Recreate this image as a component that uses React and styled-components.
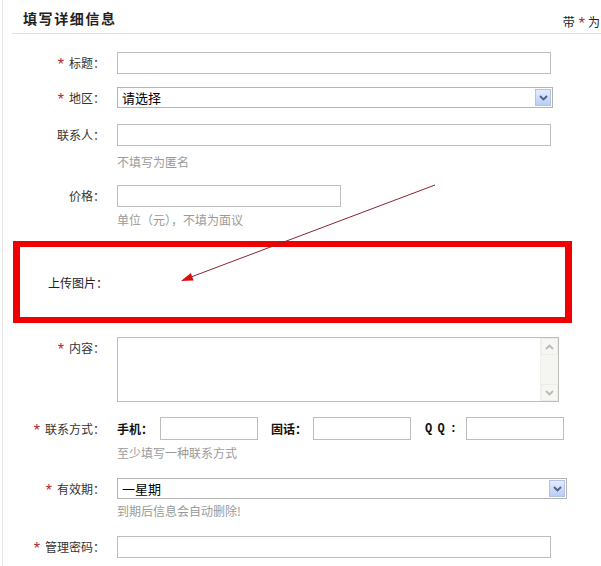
import React from "react";
import styled, { createGlobalStyle } from "styled-components";

const GlobalStyle = createGlobalStyle`
  html, body {
    margin: 0;
    padding: 0;
    background: #fff;
    overflow: hidden;
  }
  body {
    font-family: "Noto Sans CJK SC", "Liberation Sans", sans-serif;
    font-size: 12px;
    color: #333;
  }
`;

const StPage = styled.div`
  position: relative;
  width: 598px;
  height: 566px;
  margin-left: 2px;
  border-left: 1px solid #e4e4e4;
  overflow: hidden;
`;

const StHeader = styled.header`
  display: flex;
  justify-content: space-between;
  align-items: flex-start;
  height: 33px;
  margin-left: 9px;
  padding-left: 11px;
  border-bottom: 1px solid #dedede;
`;

const StTitle = styled.h2`
  margin: 9px 0 0 0;
  font-size: 14px;
  line-height: 18px;
  font-weight: bold;
  letter-spacing: 1.6px;
  color: #222;
`;

const StNote = styled.div`
  margin-top: 15px;
  margin-right: 1px;
  white-space: nowrap;
  line-height: 14px;
  color: #222;
`;

const StForm = styled.div`
  display: flex;
  flex-direction: column;
`;

const StRow = styled.div`
  display: flex;
  align-items: flex-start;
  gap: 14px;
  margin-top: ${(p) => p.$top}px;
`;

const StLabel = styled.label`
  width: 102px;
  margin-right: -2px;
  flex-shrink: 0;
  text-align: right;
  white-space: nowrap;
  line-height: ${(p) => p.$h}px;
  padding-top: ${(p) => p.$pad || 0}px;
  color: #333;
`;

const StStar = styled.span`
  display: inline-block;
  color: #b3262b;
  font-family: "Liberation Sans", sans-serif;
  font-size: 16px;
  line-height: 10px;
  vertical-align: -2px;
  margin: 0 ${(p) => p.$gap ?? 5}px 0 ${(p) => p.$lead || 0}px;
`;

const StField = styled.div`
  display: flex;
  flex-direction: column;
`;

const StInput = styled.input`
  box-sizing: border-box;
  width: ${(p) => p.$w}px;
  height: ${(p) => p.$h || 22}px;
  border: 1px solid #bdbdbd;
  padding: 0 4px;
  font: inherit;
  background: #fff;
  outline: none;
`;

const StHint = styled.div`
  margin-top: ${(p) => p.$gap}px;
  line-height: 14px;
  color: #9a9a9a;
`;

const StSelect = styled.div`
  box-sizing: border-box;
  width: ${(p) => p.$w}px;
  height: 21px;
  border: 1px solid #b4b4b4;
  display: flex;
  align-items: center;
  justify-content: space-between;
  padding: 1px 1px 1px 4px;
  font-size: 13px;
  color: #000;
  background: #fff;
`;

const StSelectBtn = styled.div`
  box-sizing: border-box;
  width: 16px;
  height: 17px;
  border: 1px solid #b2c3e6;
  background: linear-gradient(#e3ecfd, #b9cdf6);
  display: flex;
  align-items: center;
  justify-content: center;
`;

const StUploadBox = styled.div`
  box-sizing: border-box;
  display: flex;
  align-items: center;
  width: 559px;
  height: 82px;
  margin-top: 14px;
  margin-left: 10px;
  border-style: solid;
  border-color: #f00000;
  border-width: 6px 7px;
`;

const StUploadLabel = styled.div`
  width: 88px;
  text-align: right;
  color: #222;
  line-height: 14px;
  margin-top: 2px;
`;

const StTextArea = styled.div`
  box-sizing: border-box;
  display: flex;
  justify-content: flex-end;
  width: 442px;
  height: 65px;
  border: 1px solid #bdbdbd;
  background: #fff;
`;

const StScroll = styled.div`
  width: 17px;
  display: flex;
  flex-direction: column;
  justify-content: space-between;
  background: #f5f5f2;
  border-left: 1px solid #f0f0ec;
`;

const StScrollBtn = styled.div`
  box-sizing: border-box;
  height: 17px;
  border: 1px solid #ececea;
  background: #f6f6f3;
  display: flex;
  align-items: center;
  justify-content: center;
`;

const StContact = styled.div`
  display: flex;
  align-items: center;
`;

const StSubLabel = styled.span`
  width: ${(p) => p.$w}px;
  flex-shrink: 0;
  color: #111;
  font-weight: bold;
  white-space: nowrap;
`;

const StQQ = styled(StSubLabel)`
  font-family: "Liberation Mono", monospace;
  font-size: 12px;
  letter-spacing: -1px;
  padding-left: 2px;
  box-sizing: border-box;
`;

const StSpacer = styled.span`
  width: ${(p) => p.$w}px;
  flex-shrink: 0;
`;

const StArrow = styled.svg`
  position: absolute;
  left: -3px;
  top: 0;
  pointer-events: none;
`;

const Chevron = ({ color = "#4d6185", up = false }) => (
  <svg width="9" height="6" viewBox="0 0 9 6">
    <path
      d={up ? "M1 5 L4.5 1.5 L8 5" : "M1 1 L4.5 4.5 L8 1"}
      fill="none"
      stroke={color}
      strokeWidth="1.8"
    />
  </svg>
);

const Select = ({ w, value }) => (
  <StSelect $w={w}>
    <span>{value}</span>
    <StSelectBtn>
      <Chevron />
    </StSelectBtn>
  </StSelect>
);

const Label = ({ star, h = 22, pad, children }) => (
  <StLabel $h={h} $pad={pad}>
    {star && <StStar>*</StStar>}
    {children}
  </StLabel>
);

const App = () => {
  return (
    <>
      <GlobalStyle />
      <StPage>
        <StHeader>
          <StTitle>填写详细信息</StTitle>
          <StNote>
            带<StStar $lead={4} $gap={3}>*</StStar>为
          </StNote>
        </StHeader>

        <StForm>
          <StRow $top={18}>
            <Label star>标题：</Label>
            <StInput $w={434} />
          </StRow>

          <StRow $top={13}>
            <Label star h={21}>地区：</Label>
            <Select w={436} value="请选择" />
          </StRow>

          <StRow $top={16}>
            <Label>联系人：</Label>
            <StField>
              <StInput $w={434} />
              <StHint $gap={9}>不填写为匿名</StHint>
            </StField>
          </StRow>

          <StRow $top={16}>
            <Label>价格：</Label>
            <StField>
              <StInput $w={224} />
              <StHint $gap={6}>单位（元），不填为面议</StHint>
            </StField>
          </StRow>

          <StUploadBox>
            <StUploadLabel>上传图片：</StUploadLabel>
          </StUploadBox>

          <StRow $top={14}>
            <Label star h={14} pad={4}>内容：</Label>
            <StTextArea>
              <StScroll>
                <StScrollBtn>
                  <Chevron up color="#b9b9b9" />
                </StScrollBtn>
                <StScrollBtn>
                  <Chevron color="#b9b9b9" />
                </StScrollBtn>
              </StScroll>
            </StTextArea>
          </StRow>

          <StRow $top={15}>
            <Label star h={23}>联系方式：</Label>
            <StField>
              <StContact>
                <StSubLabel $w={43}>手机：</StSubLabel>
                <StInput $w={98} $h={23} />
                <StSpacer $w={13} />
                <StSubLabel $w={42}>固话：</StSubLabel>
                <StInput $w={98} $h={23} />
                <StSpacer $w={12} />
                <StQQ $w={43}>Q Q :</StQQ>
                <StInput $w={98} $h={23} />
              </StContact>
              <StHint $gap={6}>至少填写一种联系方式</StHint>
            </StField>
          </StRow>

          <StRow $top={18}>
            <Label star h={21}>有效期：</Label>
            <StField>
              <Select w={450} value="一星期" />
              <StHint $gap={5}>到期后信息会自动删除!</StHint>
            </StField>
          </StRow>

          <StRow $top={18}>
            <Label star>管理密码：</Label>
            <StInput $w={434} />
          </StRow>
        </StForm>

        <StArrow width="601" height="566" viewBox="0 0 601 566">
          <line x1="435" y1="185" x2="191" y2="277" stroke="#8a2434" strokeWidth="1" />
          <polygon points="181,281 190.8,273.1 193.6,280.5" fill="#d81010" />
        </StArrow>
      </StPage>
    </>
  );
};

export default App;
